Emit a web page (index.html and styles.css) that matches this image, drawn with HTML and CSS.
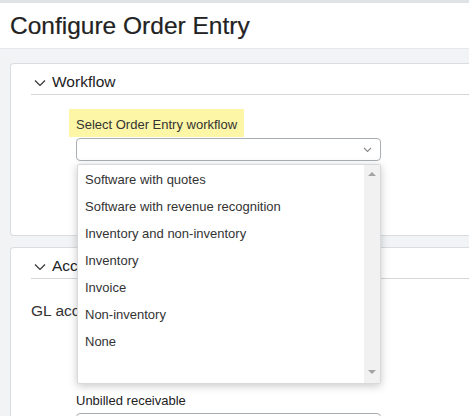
FILE: index.html
```html
<!DOCTYPE html>
<html>
<head>
<meta charset="utf-8">
<link rel="stylesheet" href="styles.css">
</head>
<body>
<div class="topbar"></div>
<header class="header"><h1 class="title">Configure Order Entry</h1></header>
<main class="content">
  <section class="card card-workflow">
    <div class="section-head">
      <svg class="chev" width="12" height="8" viewBox="0 0 12 8"><path d="M1 1.5 L6 6.5 L11 1.5" fill="none" stroke="#333" stroke-width="1.2"/></svg>
      <span class="section-title">Workflow</span>
    </div>
    <div class="field">
      <div class="label-hl">Select Order Entry workflow</div>
      <div class="select-wrap">
        <div class="select">
          <svg class="sel-chev" width="9" height="6" viewBox="0 0 9 6"><path d="M1 1 L4.5 4.5 L8 1" fill="none" stroke="#888" stroke-width="1.1"/></svg>
        </div>
        <div class="dropdown">
          <ul class="options">
            <li>Software with quotes</li>
            <li>Software with revenue recognition</li>
            <li>Inventory and non-inventory</li>
            <li>Inventory</li>
            <li>Invoice</li>
            <li>Non-inventory</li>
            <li>None</li>
          </ul>
          <div class="scrollbar">
            <span class="arrow-up"></span>
            <span class="arrow-down"></span>
          </div>
        </div>
      </div>
    </div>
  </section>
  <section class="card card-accounting">
    <div class="section-head">
      <svg class="chev" width="12" height="8" viewBox="0 0 12 8"><path d="M1 1.5 L6 6.5 L11 1.5" fill="none" stroke="#333" stroke-width="1.2"/></svg>
      <span class="section-title">Accounting</span>
    </div>
    <div class="gl-title">GL account defaults</div>
    <div class="field2">
      <div class="label2">Unbilled receivable</div>
      <div class="input"></div>
    </div>
  </section>
</main>
</body>
</html>
```
FILE: styles.css
```css
html, body {
  margin: 0;
  padding: 0;
  overflow: hidden;
}
body {
  background: #f1f3f4;
  font-family: "Liberation Sans", Arial, sans-serif;
  color: #333;
  width: 469px;
  height: 416px;
}
.topbar {
  height: 3px;
  background: #dfe3e6;
}
.header {
  background: #fff;
  height: 46px;
  border-bottom: 1px solid #e6e9eb;
  box-sizing: border-box;
}
.title {
  margin: 0;
  padding: 9px 0 0 10px;
  font-size: 24.5px;
  font-weight: normal;
  color: #222;
  line-height: 28px;
  -webkit-text-stroke: 0.2px #222;
}
.content {
  padding: 14px 0 0 10px;
  display: flex;
  flex-direction: column;
  gap: 11px;
}
.card {
  background: #fff;
  border: 1px solid #dadde0;
  border-right: none;
  border-radius: 4px 0 0 4px;
  padding-left: 20px;
  margin-right: -10px;
}
.card-workflow {
  height: 173px;
  box-sizing: border-box;
}
.section-head {
  height: 31px;
  border-bottom: 1px solid #d3d7da;
  display: flex;
  align-items: flex-end;
  padding-bottom: 4px;
  box-sizing: border-box;
}
.chev {
  margin: 0 6px 3px 3px;
}
.section-title {
  font-size: 15.5px;
  line-height: 17px;
  color: #222;
}
.field {
  margin: 14px 0 0 38px;
}
.label-hl {
  display: inline-block;
  background: #fcf6a6;
  height: 28px;
  line-height: 28px;
  padding: 2px 7px 0 7px;
  box-sizing: border-box;
  font-size: 13px;
  color: #333;
}
.select-wrap {
  position: relative;
  margin-left: 7px;
  width: 305px;
}
.select {
  margin-top: 1px;
  height: 23px;
  border: 1px solid #a9aeb2;
  border-radius: 4px;
  box-sizing: border-box;
  position: relative;
}
.sel-chev {
  position: absolute;
  right: 8px;
  top: 8px;
}
.dropdown {
  position: absolute;
  top: 26px;
  left: 1px;
  width: 304px;
  height: 220px;
  background: #fff;
  border: 1px solid #d7dadd;
  border-radius: 2px;
  box-sizing: border-box;
  box-shadow: 0 2px 8px rgba(0,0,0,0.22);
  display: flex;
  z-index: 5;
}
.options {
  list-style: none;
  margin: 0;
  padding: 1px 0 0 0;
  flex: 1;
}
.options li {
  height: 27px;
  line-height: 27px;
  padding-left: 7px;
  font-size: 13px;
  color: #333;
}
.scrollbar {
  width: 16px;
  background: #f1f1f1;
  position: relative;
}
.arrow-up, .arrow-down {
  position: absolute;
  left: 4px;
  width: 0;
  height: 0;
  border-left: 4px solid transparent;
  border-right: 4px solid transparent;
}
.arrow-up {
  top: 7px;
  border-bottom: 4px solid #a3a3a3;
}
.arrow-down {
  bottom: 9px;
  border-top: 4px solid #a3a3a3;
}
.card-accounting {
  height: 200px;
}
.gl-title {
  margin-top: 23px;
  font-size: 15.5px;
  line-height: 17px;
  color: #333;
}
.field2 {
  margin: 74px 0 0 45px;
}
.label2 {
  font-size: 13px;
  line-height: 16px;
  color: #222;
}
.input {
  margin-top: 4px;
  width: 305px;
  height: 24px;
  border: 1px solid #a9aeb2;
  border-radius: 4px;
  box-sizing: border-box;
}
```
